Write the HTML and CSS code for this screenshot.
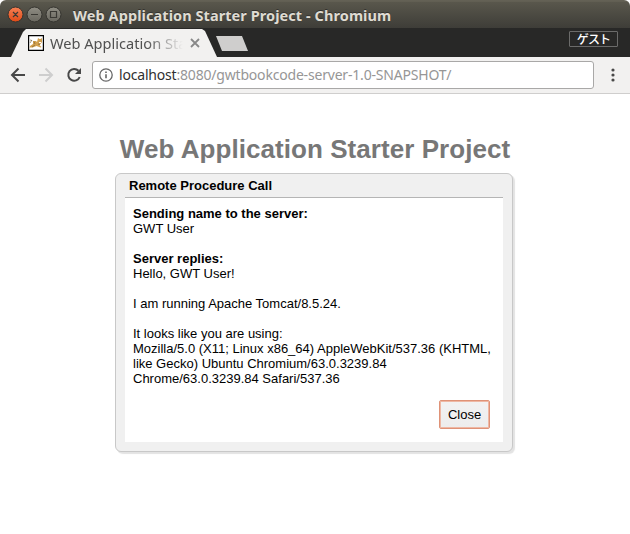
FILE: index.html
```html
<!DOCTYPE html>
<html lang="en">
<head>
<meta charset="utf-8">
<title>Web Application Starter Project</title>
<link rel="stylesheet" href="styles.css">
</head>
<body>
<div class="window">
  <header class="titlebar">
    <svg class="controls" width="60" height="28" viewBox="0 0 60 28">
      <defs>
        <linearGradient id="orange" x1="0" y1="0" x2="0" y2="1"><stop offset="0" stop-color="#f68155"/><stop offset="1" stop-color="#df4a16"/></linearGradient>
        <linearGradient id="gray" x1="0" y1="0" x2="0" y2="1"><stop offset="0" stop-color="#908e84"/><stop offset="1" stop-color="#69675f"/></linearGradient>
      </defs>
      <g stroke="#35342f"><circle cx="9.5" cy="14.5" r="7.5" fill="url(#orange)"/><circle cx="28.5" cy="14.5" r="7.5" fill="url(#gray)"/><circle cx="47.5" cy="14.5" r="7.5" fill="url(#gray)"/></g>
      <g fill="none" stroke="#3a3934" stroke-width="1.2"><path d="M7 12l5 5M12 12l-5 5M25 14.5h7M44.5 11.5h6v6h-6z"/></g>
    </svg>
    <span class="window-title">Web Application Starter Project - Chromium</span>
  </header>
  <nav class="tabstrip">
    <div class="tab">
      <svg class="favicon" width="16" height="16" viewBox="0 0 16 16">
        <path fill="#fff" stroke="#000" d="M.5.5h15v15H.5z" stroke-width="1.4"/>
        <path fill="#d2a04e" d="M2 11l3-2 0-3 3 0 1 1 1-4 1.500 1h1l1.500-1v4l-1.500 2-1 1 2 2-1 .5-4-1.500-4 1.500h-3z"/>
        <path fill="none" stroke="#6d5732" stroke-width=".6" d="M2 5l2 .5M2 8l2-3M6 6.500l1 2.500M4 12l3-2M10 9l2 .5"/>
        <path fill="#fff" d="M11 7h2v1h-2z"/>
      </svg>
      <span class="tab-title">Web Application Sta</span>
      <svg class="tab-close" width="10" height="10" viewBox="0 0 10 10"><path d="M1 1l8 8M9 1L1 9" stroke="#888" stroke-width="1.8"/></svg>
    </div>
    <div class="new-tab"></div>
    <span class="guest">ゲスト</span>
  </nav>
  <div class="toolbar">
    <svg class="nav-icons" width="92" height="36" viewBox="0 0 92 36" fill="none" stroke-width="2">
      <path stroke="#484848" d="M25 18H12M18.5 11.5L12 18l6.500 6.500"/>
      <path stroke="#cecece" d="M39 18h13M45.500 11.500L52 18l-6.500 6.500"/>
      <path stroke="#484848" d="M78.500 13.800A5.900 5.900 0 1 0 79.700 20"/><path fill="#484848" d="M81 11v6h-6z"/>
    </svg>
    <div class="address">
      <svg width="14" height="14" viewBox="0 0 14 14"><circle cx="7" cy="7" r="6.200" fill="none" stroke="#666" stroke-width="1.300"/><path d="M7 6.200v4M7 3.500v1.500" stroke="#666" stroke-width="1.600"/></svg>
      <span class="url"><span class="host">localhost</span>:8080/gwtbookcode-server-1.0-SNAPSHOT/</span>
    </div>
    <svg class="menu" width="4" height="14" viewBox="0 0 4 14" fill="#484848"><circle cx="2" cy="2" r="1.600"/><circle cx="2" cy="7" r="1.600"/><circle cx="2" cy="12" r="1.600"/></svg>
  </div>
  <main class="page">
    <h1>Web Application Starter Project</h1>
    <section class="dialog">
      <div class="caption">Remote Procedure Call</div>
      <div class="content">
        <b>Sending name to the server:</b><br>
        GWT User<br><br>
        <b>Server replies:</b><br>
        Hello, GWT User!<br><br>
        I am running Apache Tomcat/8.5.24.<br><br>
        It looks like you are using:<br>
        Mozilla/5.0 (X11; Linux x86_64) AppleWebKit/537.36 (KHTML,<br>
        like Gecko) Ubuntu Chromium/63.0.3239.84<br>
        Chrome/63.0.3239.84 Safari/537.36
        <div class="actions"><button class="close">Close</button></div>
      </div>
    </section>
  </main>
</div>
</body>
</html>
```
FILE: styles.css
```css
* { box-sizing: border-box; }
body { margin: 0; background: #fff; font-family: "Liberation Sans", Arial, sans-serif; }
.window { width: 630px; height: 534px; overflow: hidden; }
.titlebar {
  height: 28px; display: flex; align-items: center; padding-left: 6px;
  background: linear-gradient(#5d5b50 0, #6a675a 1px, #59574c 2px, #3e3d38 28px);
  border-radius: 6px 6px 0 0;
}
.controls { flex: none; margin-right: 7px; }
.window-title {
  font: bold 14.5px/28px "Noto Sans", "Open Sans", sans-serif; letter-spacing: .07px;
  color: #dfdbd2; white-space: nowrap; padding-top: 2px;
  text-shadow: 0 -1px 0 #33322e;
}
.tabstrip { height: 29px; background: #282827; display: flex; align-items: flex-start; }
.tab {
  width: 206px; height: 29px; margin-left: 11px; background: #f2f1f0;
  clip-path: polygon(0 100%, 12px 4px, 15px 1px, 191px 1px, 194px 3px, 206px 100%);
  display: flex; align-items: center; padding-left: 17px;
}
.favicon { flex: none; margin-right: 6px; }
.tab-title {
  width: 133px; white-space: nowrap; flex: none;
  font: 14.6px/28px "Noto Sans", "Open Sans", sans-serif;
  color: #505050;
  -webkit-mask-image: linear-gradient(90deg, #000 96px, transparent 133px);
  mask-image: linear-gradient(90deg, #000 96px, transparent 133px);
}
.tab-close { margin-left: 7px; }
.new-tab { width: 32px; height: 15px; margin: 8px 0 0 -1px; background: #cfcecd; clip-path: polygon(0 0, 26px 0, 32px 100%, 6px 100%); }
.guest {
  margin: 3px 12px 0 auto; width: 49px; height: 16px; border: 1px solid #6b6b6a; border-radius: 1px;
  color: #fff; text-align: center; font: 500 12px/14px "Noto Sans CJK JP", sans-serif; letter-spacing: -.8px;
}
.toolbar { height: 37px; background: #f2f1f0; border-bottom: 1px solid #cfcecd; display: flex; align-items: center; }
.nav-icons { flex: none; }
.address {
  width: 502px; height: 28px; border: 1px solid #a9a8a7; border-radius: 3px; background: #fff;
  display: flex; align-items: center; padding-left: 6px;
}
.url { margin-left: 6px; color: #969696; font: 14px/26px "Noto Sans", "Open Sans", sans-serif; letter-spacing: -.19px; white-space: nowrap; }
.host { color: #303030; }
.menu { margin-left: 17px; }
.page { display: flex; flex-direction: column; align-items: center; padding-top: 39px; }
h1 { margin: 0; font-size: 26px; letter-spacing: .06px; line-height: 32px; color: #777; white-space: nowrap; }
.dialog {
  width: 398px; height: 279px; margin: 8px 0 0 -2px; padding: 0 9px 9px; background: #f0f0f0;
  border: 1px solid #c8c8c8; border-radius: 6px; box-shadow: 2px 2px 1px #e3e3e3;
}
.caption { height: 24px; padding-left: 4px; border-bottom: 1px solid #b5b5b5; font-weight: bold; font-size: 13px; line-height: 23px; }
.content { height: 244px; padding: 8px; background: #fff; font-size: 13px; line-height: 15px; white-space: nowrap; }
.actions { display: flex; justify-content: flex-end; padding: 14px 5px 0 0; }
.close {
  width: 51px; height: 29px; padding: 0; border: 1px solid #df9277; border-radius: 2px; background: linear-gradient(#f2f2f2, #ededed);
  box-shadow: inset 0 0 0 1px #eeb8a4; font: 13px "Liberation Sans", Arial, sans-serif; color: #000;
}
```
